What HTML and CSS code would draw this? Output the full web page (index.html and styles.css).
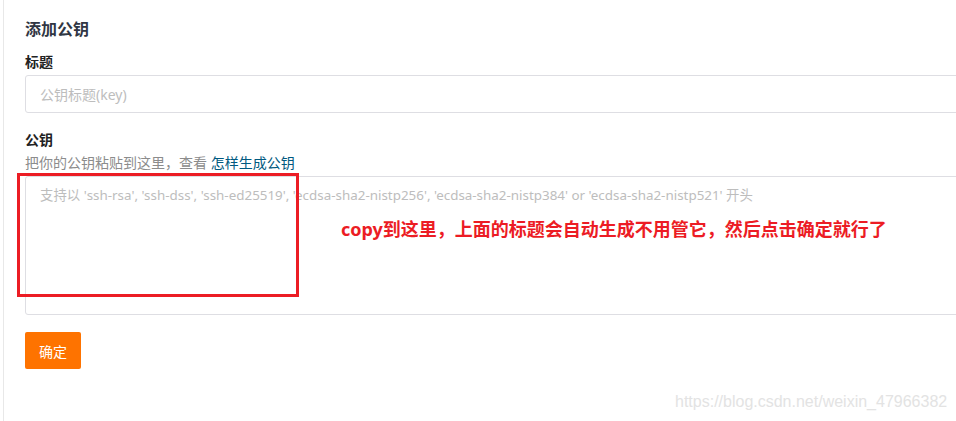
FILE: index.html
```html
<!DOCTYPE html>
<html lang="zh-CN">
<head>
<meta charset="utf-8">
<title>添加公钥</title>
<link rel="stylesheet" href="styles.css">
</head>
<body>
<div class="page">
  <form class="form">
    <h2 class="title">添加公钥</h2>
    <div class="field">
      <label class="label">标题</label>
      <input class="input" type="text" placeholder="公钥标题(key)">
    </div>
    <div class="field field-key">
      <label class="label">公钥</label>
      <div class="help">把你的公钥粘贴到这里，查看 <a class="link" href="#">怎样生成公钥</a></div>
      <textarea class="textarea" placeholder="支持以 'ssh-rsa', 'ssh-dss', 'ssh-ed25519', 'ecdsa-sha2-nistp256', 'ecdsa-sha2-nistp384' or 'ecdsa-sha2-nistp521' 开头"></textarea>
    </div>
    <button class="btn" type="button">确定</button>
  </form>
  <div class="mark-box"></div>
  <div class="mark-text">copy到这里，上面的标题会自动生成不用管它，然后点击确定就行了</div>
  <div class="watermark">https://blog.csdn.net/weixin_47966382</div>
</div>
</body>
</html>
```

FILE: styles.css
```css
html, body {
  margin: 0;
  padding: 0;
  background: #fff;
  overflow: hidden;
}
body {
  font-family: "Noto Sans", "Noto Sans CJK SC", sans-serif;
  color: #333;
}
.page {
  position: relative;
  margin-left: 3px;
  border-left: 1px solid #e8e8e8;
  height: 421px;
  box-sizing: border-box;
  padding: 17px 0 0 21px;
  width: 1100px;
}
.form {
  width: 1000px;
  display: flex;
  flex-direction: column;
  align-items: flex-start;
}
.title {
  margin: 0 0 11px;
  font-size: 16px;
  line-height: 24px;
  font-weight: 700;
  color: #303643;
}
.field {
  display: flex;
  flex-direction: column;
  width: 100%;
}
.field-key {
  margin-top: 17px;
}
.label {
  font-size: 14px;
  line-height: 20px;
  font-weight: 700;
  color: #222;
  margin-bottom: 3px;
}
.help {
  font-size: 14px;
  line-height: 20px;
  color: #8c8c8c;
  margin-bottom: 3px;
}
.link {
  color: #005980;
  text-decoration: none;
}
.input, .textarea {
  box-sizing: border-box;
  width: 100%;
  border: 1px solid #dedee3;
  border-radius: 3px;
  font-family: "Noto Sans", "Noto Sans CJK SC", sans-serif;
  font-size: 14px;
  line-height: 20px;
  padding: 8px 14px;
  outline: none;
  background: #fff;
}
.input {
  height: 38px;
}
.textarea {
  height: 139px;
  resize: none;
}
.input::placeholder, .textarea::placeholder {
  color: #bdbdbd;
}
.textarea::placeholder {
  font-size: 13.4px;
}
.btn {
  margin-top: 17px;
  height: 37px;
  padding: 0 14px;
  border: none;
  border-radius: 2px;
  background: #fe7300;
  color: #fff;
  font-family: "Noto Sans", "Noto Sans CJK SC", sans-serif;
  font-size: 14px;
}
.mark-box {
  position: absolute;
  left: 13px;
  top: 173px;
  width: 282px;
  height: 124px;
  box-sizing: border-box;
  border: 3px solid #ec1c24;
}
.mark-text {
  position: absolute;
  left: 337px;
  top: 217px;
  font-size: 18px;
  line-height: 24px;
  font-weight: 700;
  color: #ec1c24;
  white-space: nowrap;
}
.watermark {
  position: absolute;
  left: 671px;
  top: 392px;
  font-family: "Liberation Sans", Arial, sans-serif;
  font-size: 16px;
  line-height: 20px;
  color: #e3e3e3;
  white-space: nowrap;
}
```
